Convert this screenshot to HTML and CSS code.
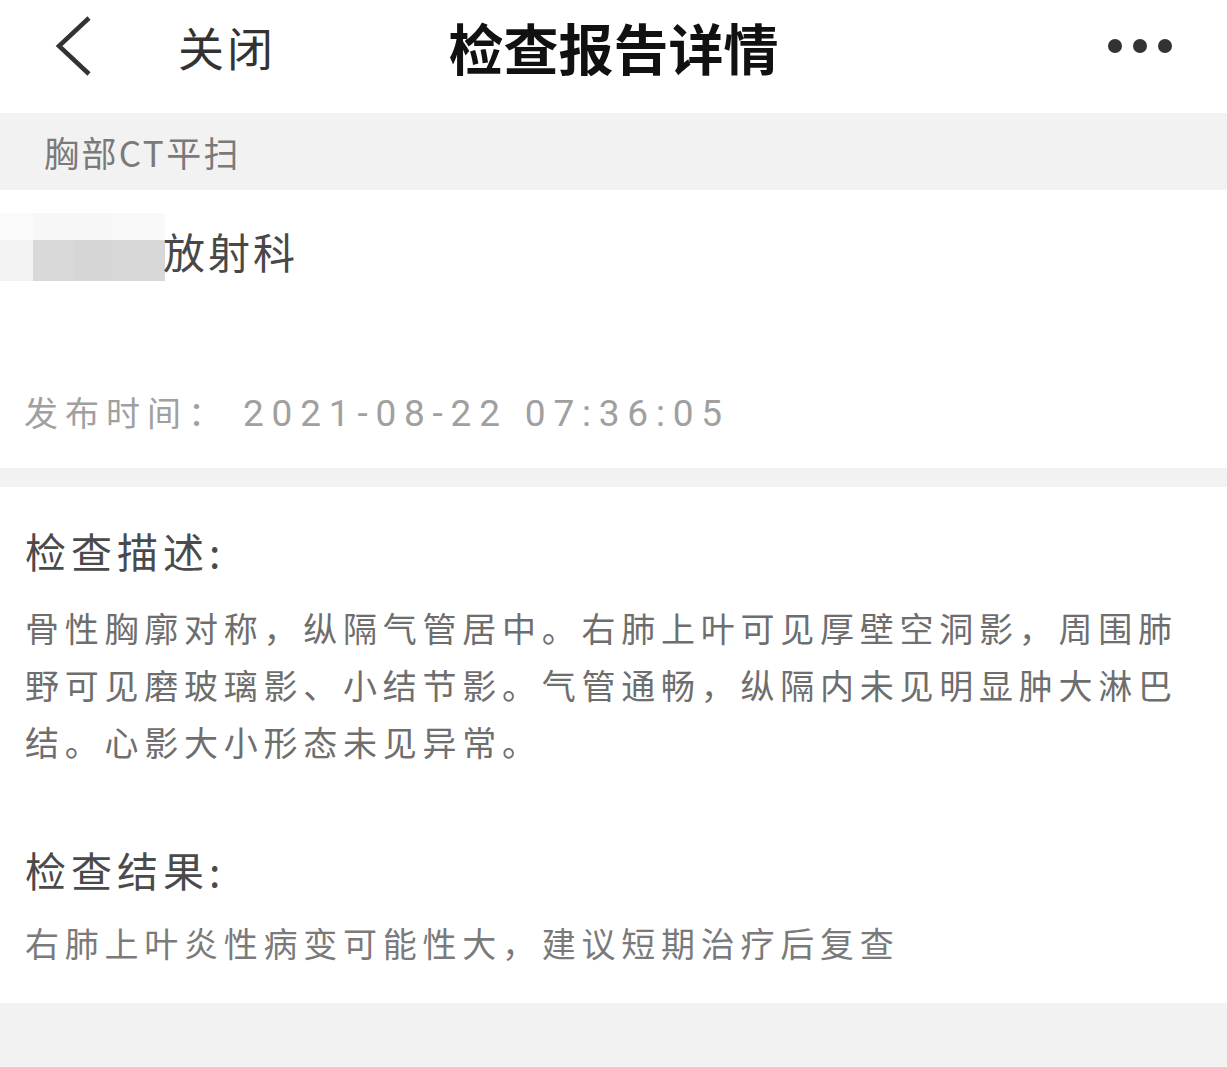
FILE: index.html
```html
<!DOCTYPE html>
<html lang="zh-CN">
<head>
<meta charset="utf-8">
<title>检查报告详情</title>
<link rel="stylesheet" href="styles.css">
</head>
<body>
<div class="page">
  <header class="topbar">
    <div class="left">
      <svg class="back" width="44" height="62" viewBox="0 0 44 62"><polyline points="37,3 7,31 37,59" fill="none" stroke="#333" stroke-width="4.5" stroke-linecap="butt" stroke-linejoin="miter"/></svg>
      <span class="close">关闭</span>
    </div>
    <h1 class="title">检查报告详情</h1>
    <div class="right">
      <svg class="more" width="64" height="16" viewBox="0 0 64 16"><circle cx="7" cy="8" r="7" fill="#333"/><circle cx="32" cy="8" r="7" fill="#333"/><circle cx="57" cy="8" r="7" fill="#333"/></svg>
    </div>
  </header>
  <div class="band">胸部CT平扫</div>
  <section class="card info">
    <div class="dept">
      <div class="mosaic">
        <i class="m1"></i><i class="m2"></i><i class="m3"></i><i class="m4"></i>
        <i class="m5"></i><i class="m6"></i><i class="m7"></i><i class="m8"></i>
      </div>
      <span class="dept-name">放射科</span>
    </div>
    <div class="date">发布时间：<span class="stamp">2021-08-22 07:36:05</span></div>
  </section>
  <section class="card detail">
    <h2 class="head">检查描述:</h2>
    <p class="body">骨性胸廓对称，纵隔气管居中。右肺上叶可见厚壁空洞影，周围肺野可见磨玻璃影、小结节影。气管通畅，纵隔内未见明显肿大淋巴结。心影大小形态未见异常。</p>
    <h2 class="head head2">检查结果:</h2>
    <p class="body result">右肺上叶炎性病变可能性大，建议短期治疗后复查</p>
  </section>
</div>
</body>
</html>
```
FILE: styles.css
```css
html, body {
  margin: 0;
  padding: 0;
  background: #f2f2f2;
}
body {
  font-family: "Noto Sans CJK SC", "Noto Sans", sans-serif;
  width: 1227px;
  height: 1067px;
  overflow: hidden;
}
.page {
  display: flex;
  flex-direction: column;
}
.topbar {
  background: #fff;
  height: 92px;
  padding-bottom: 21px;
  display: grid;
  grid-template-columns: 1fr auto 1fr;
  align-items: center;
}
.left {
  display: flex;
  align-items: center;
  padding-left: 52px;
}
.back {
  display: block;
}
.close {
  margin-left: 82px;
  font-size: 46px;
  letter-spacing: 3px;
  line-height: 92px;
  color: #333;
}
.title {
  margin: 0;
  font-size: 55px;
  font-weight: 700;
  line-height: 92px;
  color: #111;
}
.right {
  display: flex;
  justify-content: flex-end;
  padding-right: 55px;
}
.more {
  display: block;
}
.band {
  height: 77px;
  line-height: 77px;
  padding-left: 44px;
  font-size: 35px;
  letter-spacing: 2.4px;
  color: #7a7a7a;
  background: #f2f2f2;
}
.card {
  background: #fff;
}
.info {
  height: 278px;
  box-sizing: border-box;
  padding-top: 23px;
}
.dept {
  display: flex;
  align-items: center;
  height: 68px;
}
.mosaic {
  display: grid;
  grid-template-columns: 33px 40px 40px 52px;
  grid-template-rows: 27px 41px;
  width: 165px;
  height: 68px;
}
.mosaic i { display: block; }
.m1 { background: #fafafa; }
.m2 { background: #f7f7f7; }
.m3 { background: #f7f7f7; }
.m4 { background: #f9f9f9; }
.m5 { background: #f3f3f3; }
.m6 { background: #d9d9d9; }
.m7 { background: #d6d6d6; }
.m8 { background: #d8d8d8; }
.dept-name {
  font-size: 42px;
  letter-spacing: 3px;
  color: #484848;
  margin-left: -2px;
  line-height: 68px;
  position: relative;
  top: 4px;
}
.date {
  margin-top: 106px;
  padding-left: 24px;
  line-height: 50px;
  font-size: 34px;
  letter-spacing: 7px;
  color: #a0a0a0;
}
.stamp {
  font-family: Roboto, "Noto Sans", sans-serif;
  font-size: 37px;
  letter-spacing: 7.8px;
  margin-left: 14px;
}
.detail {
  margin-top: 19px;
  padding: 38px 25px 30px 25px;
  height: 516px;
  box-sizing: border-box;
}
.head {
  margin: 0;
  font-weight: 400;
  font-size: 41px;
  line-height: 50px;
  letter-spacing: 5px;
  color: #4a4a4a;
}
.head2 {
  margin-top: 74px;
}
.body {
  margin: 24px 0 0 0;
  font-size: 34px;
  line-height: 57px;
  letter-spacing: 5.75px;
  color: #6e6e6e;
}
.result {
  margin-top: 20px;
  color: #7a7a7a;
}
```
